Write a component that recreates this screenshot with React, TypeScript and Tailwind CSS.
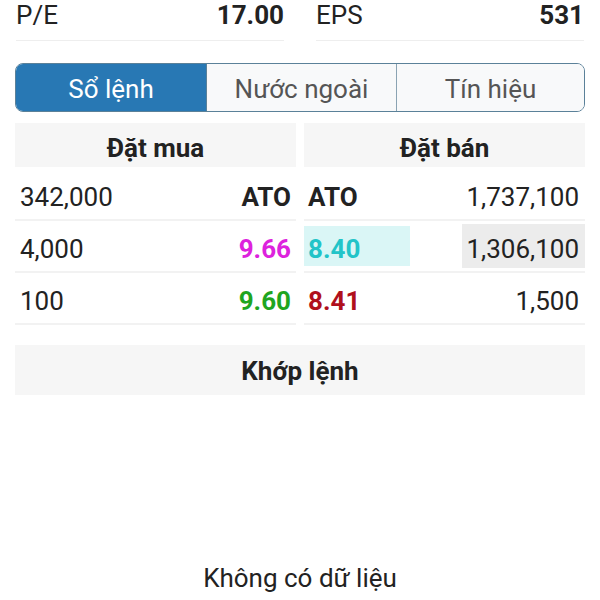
import React from "react";

const font = { fontFamily: "Roboto, 'Noto Sans', sans-serif" };

function Row({
  vol,
  price,
  priceCls,
  sPrice,
  sPriceCls,
  sPriceBg,
  sVol,
  sVolBg,
}: {
  vol: string;
  price: string;
  priceCls: string;
  sPrice: string;
  sPriceCls: string;
  sPriceBg?: boolean;
  sVol: string;
  sVolBg?: boolean;
}) {
  return (
    <div className="grid grid-cols-2 gap-[8px] h-[52px]">
      <div className="flex items-center justify-between border-b-2 border-[#f2f2f2] pl-[5px] pr-[5px] pt-[6px]">
        <span className="text-[#222]">{vol}</span>
        <span className={`font-bold ${priceCls}`}>{price}</span>
      </div>
      <div className="flex items-center justify-between border-b-2 border-[#f2f2f2]">
        <div
          className={`flex items-center w-[106px] h-[40px] pl-[4px] pt-[6px] ${
            sPriceBg ? "bg-[#daf6f6]" : ""
          }`}
        >
          <span className={`font-bold ${sPriceCls}`}>{sPrice}</span>
        </div>
        <div
          className={`flex items-center justify-end h-[44px] pr-[6px] pt-[6px] ${
            sVolBg ? "bg-[#ececec] w-[123px]" : ""
          }`}
        >
          <span className="text-[#222]">{sVol}</span>
        </div>
      </div>
    </div>
  );
}

export default function App() {
  return (
    <div
      className="w-[600px] h-[600px] bg-white overflow-hidden text-[26px] leading-none text-[#222]"
      style={font}
    >
      <div className="grid grid-cols-2 gap-[32px] px-[16px]">
        <div className="flex justify-between items-center h-[41px] pb-[11px] border-b border-[#eeeeee]">
          <span>P/E</span>
          <span className="font-bold">17.00</span>
        </div>
        <div className="flex justify-between items-center h-[41px] pb-[11px] border-b border-[#eeeeee]">
          <span>EPS</span>
          <span className="font-bold">531</span>
        </div>
      </div>

      <div className="px-[15px]">
        <div className="mt-[22px] flex h-[49px] rounded-[8px] border-[1.5px] border-[#5b8199] overflow-hidden">
          <div className="w-[190px] flex items-center justify-center bg-[#2878b4] text-white pt-[2px]">
            Sổ lệnh
          </div>
          <div className="w-[190px] flex items-center justify-center bg-[#f8f9fa] text-[#555] border-l-[1.5px] border-[#5b8199] pt-[2px]">
            Nước ngoài
          </div>
          <div className="flex-1 flex items-center justify-center bg-[#f8f9fa] text-[#555] border-l border-[#8aa3b3] pt-[2px]">
            Tín hiệu
          </div>
        </div>

        <div className="mt-[11px] grid grid-cols-2 gap-[8px]">
          <div className="h-[44px] flex items-center justify-center bg-[#f6f6f6] font-bold pt-[6px]">
            Đặt mua
          </div>
          <div className="h-[44px] flex items-center justify-center bg-[#f6f6f6] font-bold pt-[6px]">
            Đặt bán
          </div>
        </div>

        <div className="mt-[2px]">
          <Row
            vol="342,000"
            price="ATO"
            priceCls="text-[#222]"
            sPrice="ATO"
            sPriceCls="text-[#222]"
            sVol="1,737,100"
          />
          <Row
            vol="4,000"
            price="9.66"
            priceCls="text-[#dd22dd]"
            sPrice="8.40"
            sPriceCls="text-[#22c4c8]"
            sPriceBg
            sVol="1,306,100"
            sVolBg
          />
          <Row
            vol="100"
            price="9.60"
            priceCls="text-[#1fa51f]"
            sPrice="8.41"
            sPriceCls="text-[#b0101c]"
            sVol="1,500"
          />
        </div>

        <div className="mt-[20px] h-[50px] flex items-center justify-center bg-[#f6f6f6] font-bold pt-[2px]">
          Khớp lệnh
        </div>
      </div>

      <div className="mt-[170px] flex justify-center">Không có dữ liệu</div>
    </div>
  );
}
